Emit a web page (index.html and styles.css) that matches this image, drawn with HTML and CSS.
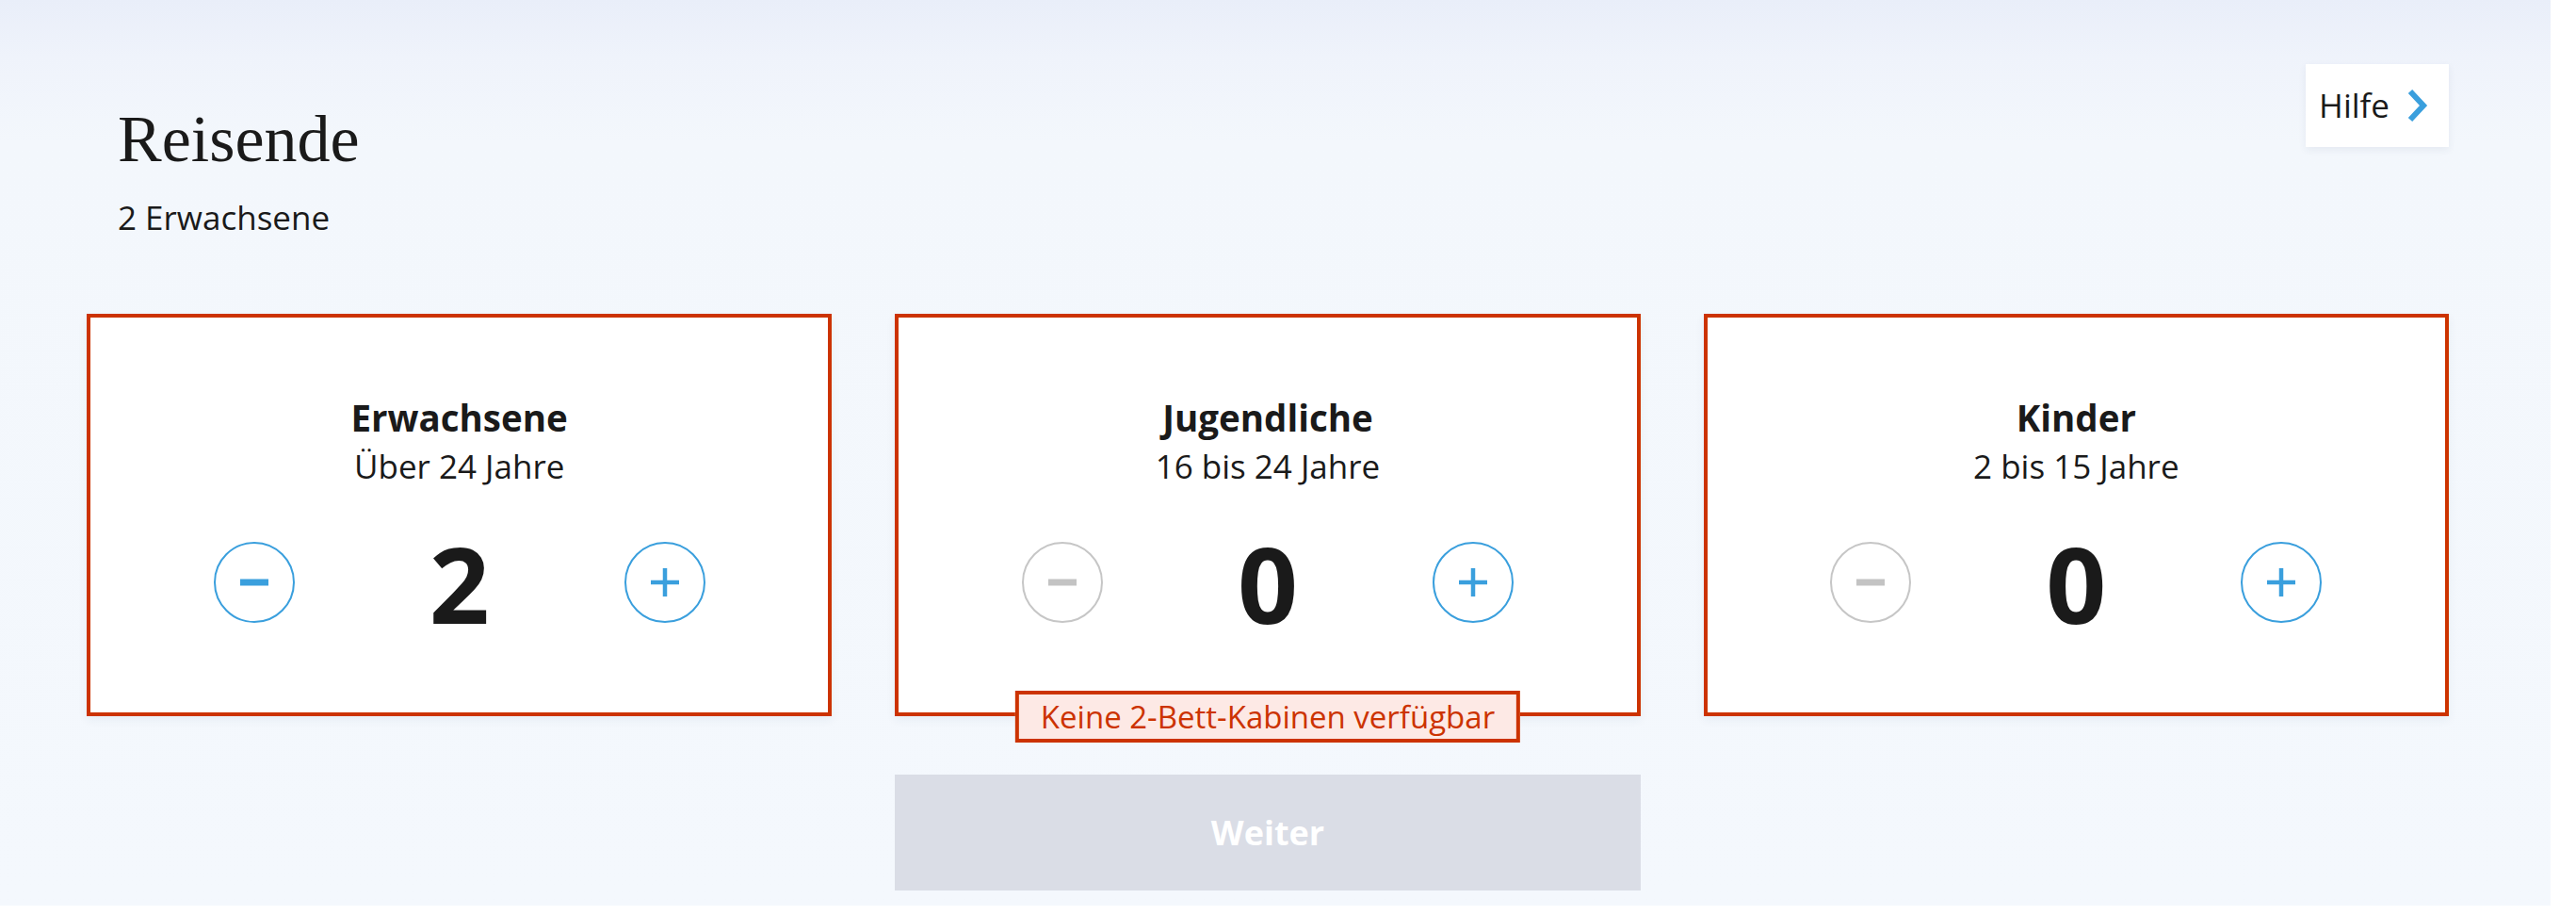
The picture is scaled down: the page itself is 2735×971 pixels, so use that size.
FILE: index.html
```html
<!DOCTYPE html>
<html lang="de">
<head>
<meta charset="utf-8">
<title>Reisende</title>
<link rel="stylesheet" href="styles.css">
</head>
<body>
<div class="panel">
  <header class="head">
    <div class="head-text">
      <h1 class="title">Reisende</h1>
      <p class="summary">2 Erwachsene</p>
    </div>
    <a class="help" href="#">
      <span class="help-label">Hilfe</span>
      <svg class="help-chevron" viewBox="0 0 24 36" width="24" height="36" aria-hidden="true">
        <polyline points="4,3 18,18 4,33" fill="none" stroke="#3a9fdd" stroke-width="6" stroke-linecap="butt" stroke-linejoin="miter"/>
      </svg>
    </a>
  </header>

  <div class="grid">
    <section class="card">
      <h2 class="card-title">Erwachsene</h2>
      <p class="card-sub">Über 24 Jahre</p>
      <div class="counter">
        <button class="step step-active" aria-label="weniger">
          <svg viewBox="0 0 30 30" width="30" height="30"><rect x="0" y="11.5" width="30" height="7" fill="#3a9fdd"/></svg>
        </button>
        <span class="count">2</span>
        <button class="step step-active" aria-label="mehr">
          <svg viewBox="0 0 30 30" width="30" height="30"><rect x="0" y="12.75" width="30" height="4.5" fill="#3a9fdd"/><rect x="12.75" y="0" width="4.5" height="30" fill="#3a9fdd"/></svg>
        </button>
      </div>
    </section>

    <section class="card">
      <h2 class="card-title">Jugendliche</h2>
      <p class="card-sub">16 bis 24 Jahre</p>
      <div class="counter">
        <button class="step step-disabled" aria-label="weniger">
          <svg viewBox="0 0 30 30" width="30" height="30"><rect x="0" y="11.5" width="30" height="7" fill="#c3c3c3"/></svg>
        </button>
        <span class="count">0</span>
        <button class="step step-active" aria-label="mehr">
          <svg viewBox="0 0 30 30" width="30" height="30"><rect x="0" y="12.75" width="30" height="4.5" fill="#3a9fdd"/><rect x="12.75" y="0" width="4.5" height="30" fill="#3a9fdd"/></svg>
        </button>
      </div>
      <div class="badge">Keine 2-Bett-Kabinen verfügbar</div>
    </section>

    <section class="card">
      <h2 class="card-title">Kinder</h2>
      <p class="card-sub">2 bis 15 Jahre</p>
      <div class="counter">
        <button class="step step-disabled" aria-label="weniger">
          <svg viewBox="0 0 30 30" width="30" height="30"><rect x="0" y="11.5" width="30" height="7" fill="#c3c3c3"/></svg>
        </button>
        <span class="count">0</span>
        <button class="step step-active" aria-label="mehr">
          <svg viewBox="0 0 30 30" width="30" height="30"><rect x="0" y="12.75" width="30" height="4.5" fill="#3a9fdd"/><rect x="12.75" y="0" width="4.5" height="30" fill="#3a9fdd"/></svg>
        </button>
      </div>
    </section>

    <button class="next">Weiter</button>
  </div>
</div>
</body>
</html>
```

FILE: styles.css
```css
* { box-sizing: border-box; }

html, body {
  margin: 0;
  padding: 0;
  background: #ffffff;
}

body {
  font-family: "Open Sans", "Noto Sans", sans-serif;
  color: #1a1a1a;
}

.panel {
  width: 2708px;
  height: 961px;
  padding: 68px 108px 0 92px;
  background: linear-gradient(180deg, #e9eef9 0px, #eff3fb 60px, #f3f7fc 150px, #f4f8fd 100%);
}

.head {
  display: flex;
  justify-content: space-between;
  align-items: flex-start;
  padding-left: 33px;
}

.head-text {
  padding-top: 45px;
}

.title {
  margin: 0;
  font-family: "Liberation Serif", "Times New Roman", serif;
  font-weight: 400;
  font-size: 70px;
  line-height: 70px;
  color: #1a1a1a;
}

.summary {
  margin: 24px 0 0;
  font-size: 35px;
  line-height: 48px;
}

.help {
  display: flex;
  align-items: center;
  height: 88px;
  padding: 0 21px 0 14px;
  gap: 18px;
  background: #ffffff;
  box-shadow: 0 3px 8px rgba(40, 60, 100, 0.07);
  text-decoration: none;
  color: #1a1a1a;
}

.help-label {
  font-size: 35px;
  line-height: 48px;
}

.help-chevron {
  display: block;
}

.grid {
  display: grid;
  grid-template-columns: repeat(3, 1fr);
  column-gap: 67px;
  margin-top: 78px;
}

.card {
  position: relative;
  display: flex;
  flex-direction: column;
  align-items: center;
  padding: 80px 0 78px;
  background: #ffffff;
  border: 4px solid #cc3300;
  box-shadow: 0 4px 10px rgba(40, 60, 100, 0.06);
}

.card-title {
  margin: 0;
  font-size: 38.5px;
  line-height: 52px;
  font-weight: 700;
}

.card-sub {
  margin: 1px 0 0;
  font-size: 35px;
  line-height: 50px;
}

.counter {
  display: flex;
  align-items: center;
  margin-top: 38px;
  height: 120px;
}

.step {
  display: flex;
  align-items: center;
  justify-content: center;
  width: 86px;
  height: 86px;
  padding: 0;
  border-radius: 50%;
  background: #ffffff;
  cursor: pointer;
}

.step svg { display: block; }

.step-active { border: 2px solid #3a9fdd; }

.step-disabled { border: 2px solid #c6c6c6; }

.count {
  width: 350px;
  text-align: center;
  font-size: 112px;
  line-height: 120px;
  font-weight: 700;
  position: relative;
  top: 1px;
}

.badge {
  position: absolute;
  left: 50%;
  bottom: -32px;
  transform: translateX(-50%);
  height: 55px;
  padding: 0 23px;
  display: flex;
  align-items: center;
  white-space: nowrap;
  background: #fde9e5;
  border: 4px solid #cc3300;
  color: #cc3300;
  font-size: 33px;
  line-height: 44px;
}

.next {
  grid-column: 2;
  margin-top: 62px;
  height: 123px;
  border: 0;
  background: #dadde6;
  color: #ffffff;
  font-family: "Open Sans", "Noto Sans", sans-serif;
  font-weight: 700;
  font-size: 36px;
  line-height: 52px;
}
```
